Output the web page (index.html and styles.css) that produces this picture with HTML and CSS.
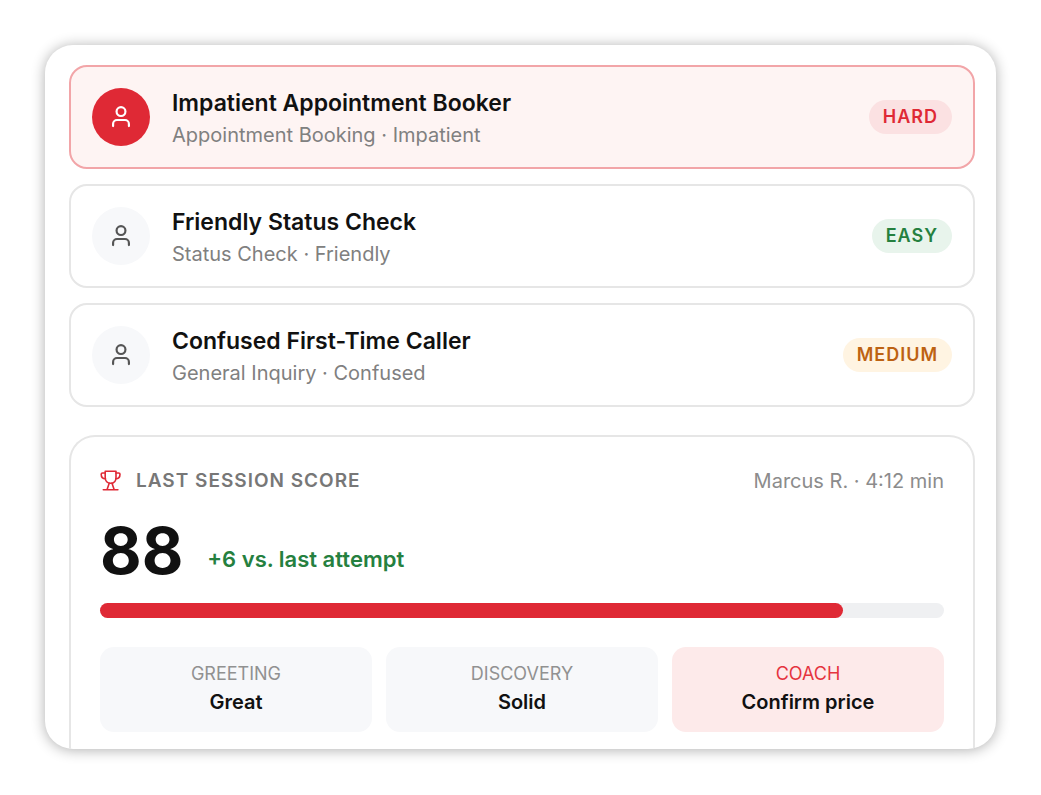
FILE: index.html
```
<!DOCTYPE html>
<html lang="en">
<head>
<meta charset="utf-8">
<meta name="viewport" content="width=device-width, initial-scale=1">
<title>Practice scenarios</title>
<link rel="stylesheet" href="styles.css">
</head>
<body>
<svg class="sprite" aria-hidden="true">
  <symbol id="person" viewBox="0 0 24 24">
    <circle cx="12" cy="7" r="4.1"/>
    <path d="M4.700 20.400v-2a3.600 3.600 0 0 1 3.600-3.600h7.400a3.600 3.600 0 0 1 3.600 3.600v2"/>
  </symbol>
</svg>
<main class="panel">
  <div class="scenarios">
    <button type="button" class="scenario scenario-selected" aria-pressed="true">
      <span class="avatar"><svg class="avatar-icon" aria-hidden="true"><use href="#person"/></svg></span>
      <span class="scenario-text">
        <span class="scenario-title">Impatient Appointment Booker</span>
        <span class="scenario-meta">Appointment Booking · Impatient</span>
      </span>
      <span class="badge badge-hard">HARD</span>
    </button>
    <button type="button" class="scenario" aria-pressed="false">
      <span class="avatar"><svg class="avatar-icon" aria-hidden="true"><use href="#person"/></svg></span>
      <span class="scenario-text">
        <span class="scenario-title">Friendly Status Check</span>
        <span class="scenario-meta">Status Check · Friendly</span>
      </span>
      <span class="badge badge-easy">EASY</span>
    </button>
    <button type="button" class="scenario" aria-pressed="false">
      <span class="avatar"><svg class="avatar-icon" aria-hidden="true"><use href="#person"/></svg></span>
      <span class="scenario-text">
        <span class="scenario-title">Confused First-Time Caller</span>
        <span class="scenario-meta">General Inquiry · Confused</span>
      </span>
      <span class="badge badge-medium">MEDIUM</span>
    </button>
  </div>
  <section class="score">
    <header class="score-header">
      <svg class="trophy" viewBox="0 0 22 22" aria-hidden="true">
        <path d="M5.200 1.200h10.800v6.300c0 3.600-2.100 5.800-5.400 5.800s-5.400-2.200-5.400-5.800z"/>
        <path d="M5.200 3H2.500a1.300 1.300 0 0 0-1.300 1.300c0 2.500 1.500 4.400 4.200 4.400M16 3h2.700A1.300 1.300 0 0 1 20 4.300c0 2.500-1.500 4.400-4.200 4.400"/>
        <path d="M9.200 13.300L7 19.700M12 13.300l2.200 6.400M3.300 19.700h14.600"/>
      </svg>
      <h2 class="score-heading">LAST SESSION SCORE</h2>
      <span class="score-session">Marcus R. · 4:12 min</span>
    </header>
    <div class="score-line">
      <span class="score-value">88</span>
      <span class="score-change">+6 vs. last attempt</span>
    </div>
    <div class="bar"><div class="bar-fill" style="width: 88%"></div></div>
    <div class="tiles">
      <div class="tile"><span class="tile-label">GREETING</span><span class="tile-value">Great</span></div>
      <div class="tile"><span class="tile-label">DISCOVERY</span><span class="tile-value">Solid</span></div>
      <div class="tile tile-coach"><span class="tile-label">COACH</span><span class="tile-value">Confirm price</span></div>
    </div>
  </section>
</main>
</body>
</html>
```
FILE: styles.css
```
* {
  box-sizing: border-box;
}

body {
  margin: 0;
  padding: 45px;
  background: #fff;
  color: #111;
  font-family: Inter, "Liberation Sans", sans-serif;
}

.sprite {
  display: none;
}

.panel {
  padding: 20px 21px 0 24px;
  border-radius: 28px;
  background: #fff;
  box-shadow: 0 1px 14px rgba(0, 0, 0, 0.32);
  overflow: hidden;
}

.scenarios {
  display: grid;
  gap: 15px;
}

.scenario {
  display: flex;
  align-items: center;
  gap: 22px;
  width: 100%;
  padding: 18px 21px;
  border: 2px solid #e6e6e6;
  border-radius: 18px;
  background: #fff;
  color: inherit;
  font: inherit;
  text-align: left;
}

.scenario-selected {
  border-color: #f2a5a8;
  background: #fef4f3;
}

.avatar {
  display: grid;
  place-items: center;
  width: 58px;
  height: 58px;
  border-radius: 50%;
  background: #f7f8fa;
  color: #555;
}

.scenario-selected .avatar {
  background: #df2935;
  color: #fff;
}

.avatar-icon {
  width: 26px;
  height: 26px;
  fill: none;
  stroke: currentColor;
  stroke-width: 2;
  stroke-linecap: round;
}

.scenario-text {
  display: grid;
  flex: 1;
  gap: 4px;
  padding-top: 4px;
  line-height: 28px;
}

.scenario-title {
  font-size: 23px;
  font-weight: 600;
}

.scenario-meta {
  color: #808080;
  font-size: 20px;
}

.badge {
  padding: 0 14px;
  border-radius: 17px;
  font-size: 18px;
  font-weight: 600;
  line-height: 34px;
  letter-spacing: 1px;
}

.badge-hard {
  background: #fbe1e2;
  color: #df2935;
}

.badge-easy {
  background: #e8f4ec;
  color: #25803f;
}

.badge-medium {
  background: #fff4e2;
  color: #bd6212;
}

.score {
  margin-top: 28px;
  padding: 29px 29px 17px;
  border: 2px solid #e6e6e6;
  border-bottom: 0;
  border-radius: 26px 26px 0 0;
}

.score-header {
  display: flex;
  align-items: center;
  gap: 14px;
  line-height: 30px;
}

.trophy {
  width: 22px;
  height: 22px;
  fill: none;
  stroke: #df2935;
  stroke-width: 1.6;
  stroke-linecap: round;
  stroke-linejoin: round;
}

.score-heading {
  flex: 1;
  margin: 0;
  color: #777;
  font-size: 19px;
  font-weight: 600;
  letter-spacing: 1px;
}

.score-session {
  color: #8c8c8c;
  font-size: 20px;
}

.score-line {
  display: flex;
  align-items: flex-end;
  gap: 24px;
  margin-top: 19px;
}

.score-value {
  font-size: 64px;
  font-weight: 700;
  line-height: 72px;
}

.score-change {
  padding-bottom: 14px;
  color: #25803f;
  font-size: 22px;
  font-weight: 600;
  line-height: 28px;
}

.bar {
  height: 15px;
  margin-top: 16px;
  border-radius: 8px;
  background: #eff0f2;
}

.bar-fill {
  height: 100%;
  border-radius: 8px;
  background: #df2935;
}

.tiles {
  display: grid;
  grid-template-columns: repeat(3, 1fr);
  gap: 14px;
  margin-top: 29px;
}

.tile {
  display: grid;
  padding: 13px 14px 16px;
  border-radius: 14px;
  background: #f7f8fa;
  text-align: center;
  line-height: 28px;
}

.tile-label {
  color: #919191;
  font-size: 18px;
}

.tile-value {
  font-size: 20px;
  font-weight: 600;
}

.tile-coach {
  background: #fdeaea;
}

.tile-coach .tile-label {
  color: #e5343f;
}
```
